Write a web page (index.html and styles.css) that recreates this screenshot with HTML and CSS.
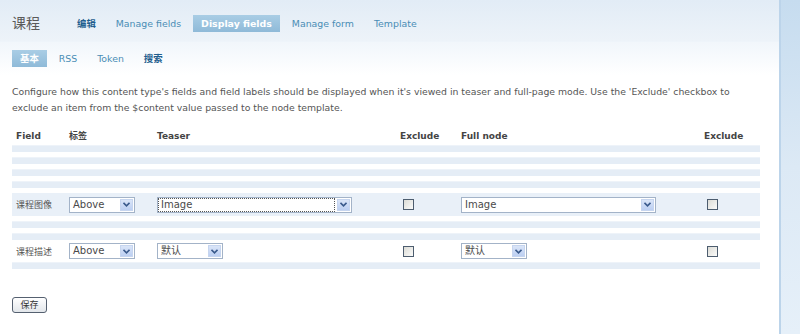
FILE: index.html
```html
<!DOCTYPE HTML>
<html lang="zh">
<head>
    <meta charset=UTF-8>
    <title>课程 - Display fields</title>
    <link rel="stylesheet" href="styles.css">
</head>
<body>

<div class="page">
    <div class="main">

        <!-- 标题和主选项卡 -->
        <div class="head">
            <h2 class="title">课程</h2>
            <ul class="tabs">
                <li><a href="#" class="cjk">编辑</a></li>
                <li><a href="#">Manage fields</a></li>
                <li class="active"><a href="#">Display fields</a></li>
                <li><a href="#">Manage form</a></li>
                <li><a href="#">Template</a></li>
            </ul>
        </div>

        <!-- 二级选项卡 -->
        <ul class="subtabs">
            <li class="active"><a href="#">基本</a></li>
            <li><a href="#">RSS</a></li>
            <li><a href="#">Token</a></li>
            <li><a href="#" class="cjk">搜索</a></li>
        </ul>

        <div class="content">
            <p class="desc">Configure how this content type's fields and field labels should be displayed when it's viewed in teaser and full-page mode. Use the 'Exclude' checkbox to exclude an item from the $content value passed to the node template.</p>

            <table class="fields">
                <colgroup>
                    <col class="c-field">
                    <col class="c-label">
                    <col class="c-teaser">
                    <col class="c-ex">
                    <col class="c-full">
                    <col class="c-ex2">
                </colgroup>
                <tr class="header">
                    <th>Field</th>
                    <th class="cjk">标签</th>
                    <th>Teaser</th>
                    <th>Exclude</th>
                    <th>Full node</th>
                    <th>Exclude</th>
                </tr>
                <!-- 隐藏字段留下的空行 -->
                <tr class="blank even"><td colspan="6"></td></tr>
                <tr class="blank odd"><td colspan="6"></td></tr>
                <tr class="blank even"><td colspan="6"></td></tr>
                <tr class="blank odd"><td colspan="6"></td></tr>
                <tr class="blank even"><td colspan="6"></td></tr>
                <tr class="blank odd"><td colspan="6"></td></tr>
                <tr class="blank even"><td colspan="6"></td></tr>
                <tr class="blank odd"><td colspan="6"></td></tr>

                <tr class="item even">
                    <td>课程图像</td>
                    <td><span class="select w-short"><span class="val">Above</span><span class="arrow"><svg width="7" height="5" viewBox="0 0 7 5"><path d="M0.5 0.8 L3.5 3.8 L6.5 0.8" fill="none" stroke="#3a5a8c" stroke-width="1.6"/></svg></span></span></td>
                    <td><span class="select w-long focus"><span class="val">Image</span><span class="arrow"><svg width="7" height="5" viewBox="0 0 7 5"><path d="M0.5 0.8 L3.5 3.8 L6.5 0.8" fill="none" stroke="#3a5a8c" stroke-width="1.6"/></svg></span></span></td>
                    <td><span class="checkbox"></span></td>
                    <td><span class="select w-long"><span class="val">Image</span><span class="arrow"><svg width="7" height="5" viewBox="0 0 7 5"><path d="M0.5 0.8 L3.5 3.8 L6.5 0.8" fill="none" stroke="#3a5a8c" stroke-width="1.6"/></svg></span></span></td>
                    <td><span class="checkbox"></span></td>
                </tr>

                <tr class="blank odd"><td colspan="6"></td></tr>
                <tr class="blank even"><td colspan="6"></td></tr>
                <tr class="blank odd"><td colspan="6"></td></tr>
                <tr class="blank even"><td colspan="6"></td></tr>

                <tr class="item odd">
                    <td>课程描述</td>
                    <td><span class="select w-short"><span class="val">Above</span><span class="arrow"><svg width="7" height="5" viewBox="0 0 7 5"><path d="M0.5 0.8 L3.5 3.8 L6.5 0.8" fill="none" stroke="#3a5a8c" stroke-width="1.6"/></svg></span></span></td>
                    <td><span class="select w-short"><span class="val">默认</span><span class="arrow"><svg width="7" height="5" viewBox="0 0 7 5"><path d="M0.5 0.8 L3.5 3.8 L6.5 0.8" fill="none" stroke="#3a5a8c" stroke-width="1.6"/></svg></span></span></td>
                    <td><span class="checkbox"></span></td>
                    <td><span class="select w-short"><span class="val">默认</span><span class="arrow"><svg width="7" height="5" viewBox="0 0 7 5"><path d="M0.5 0.8 L3.5 3.8 L6.5 0.8" fill="none" stroke="#3a5a8c" stroke-width="1.6"/></svg></span></span></td>
                    <td><span class="checkbox"></span></td>
                </tr>
                <tr class="blank even tail"><td colspan="6"></td></tr>
            </table>

            <button class="save">保存</button>
        </div>

    </div>
    <div class="side"></div>
</div>

</body>
</html>
```

FILE: styles.css
```css
body {
    margin: 0;
    font-family: "DejaVu Sans", "Noto Sans CJK SC", sans-serif;
    font-size: 9px;
    color: #555;
    background-color: #fff;
}

ul {
    list-style-type: none;
    margin: 0;
    padding: 0;
}

a {
    text-decoration: none;
}

.page {
    display: flex;
    height: 334px;
}

.main {
    width: 779px;
    background-color: #fff;
}

.side {
    flex: 1;
    border-left: 2px solid #bcd4ea;
    background: linear-gradient(#c6dcef, #dce9f5 50%, #e6f0f9);
}

/* 标题和主选项卡 */
.head {
    display: flex;
    align-items: center;
    height: 38px;
    padding: 3px 0 0 12px;
    border-bottom: 1px solid #eef4fa;
    background: linear-gradient(#e2ecf6, #edf3f9);
}

.title {
    margin: 0 29px 0 0;
    font-family: "Noto Sans CJK SC", sans-serif;
    font-size: 14px;
    font-weight: normal;
    color: #5a5a5a;
    line-height: 18px;
}

.tabs, .subtabs {
    display: flex;
    gap: 4px;
}

.tabs a, .subtabs a {
    display: block;
    height: 17px;
    line-height: 17px;
    padding: 0 8px;
    color: #4a8db5;
    font-size: 9.4px;
}

.tabs a.cjk, .subtabs a.cjk {
    color: #1f5e8e;
    font-weight: bold;
}

.tabs .active a, .subtabs .active a {
    color: #fff;
    font-weight: bold;
    background: linear-gradient(#a9cde5, #8fbad8);
}

.tabs {
    margin-top: 2px;
}

/* 二级选项卡 */
.subtabs {
    height: 33px;
    padding: 8px 12px 0 12px;
    box-sizing: border-box;
    background: linear-gradient(#f1f6fb, #fff);
}

.content {
    padding: 0 19px 0 12px;
}

.desc {
    margin: 9px 0 10px 0;
    line-height: 16px;
    font-size: 9.3px;
}

/* 字段表格 */
.fields {
    width: 748px;
    border-collapse: collapse;
    table-layout: fixed;
}

.c-field { width: 53px; }
.c-label { width: 88px; }
.c-teaser { width: 243px; }
.c-ex { width: 61px; }
.c-full { width: 243px; }
.c-ex2 { width: 60px; }

.fields th {
    height: 19px;
    padding: 0 4px;
    text-align: left;
    color: #444;
    font-weight: bold;
}

.fields td {
    padding: 0 4px;
    white-space: nowrap;
}

.blank td {
    padding: 0;
}

.blank.even td {
    height: 6px;
    background-color: #e5edf6;
    border-top: 1px solid #eef3f9;
}

.blank.odd td {
    height: 5px;
    background-color: #fff;
}

.item td {
    height: 23px;
}

.item.odd td {
    height: 22px;
}

.item.even td {
    background-color: #e9f0f8;
}

.item.odd td {
    background-color: #fff;
}

/* 下拉框 */
.select {
    display: flex;
    align-items: stretch;
    height: 16px;
    box-sizing: border-box;
    border: 1px solid #a3b3c8;
    background-color: #fff;
    font-size: 10px;
    color: #4a4a4a;
}

.w-short {
    width: 66px;
}

.w-long {
    width: 195px;
}

.select .val {
    flex: 1;
    padding-left: 3px;
    line-height: 14px;
    overflow: hidden;
}

.select.focus .val {
    margin: 1px 2px 1px 1px;
    line-height: 12px;
    padding-left: 2px;
    overflow: visible;
    outline: 1px dotted #555;
}

.select .arrow {
    width: 13px;
    margin: 1px;
    display: flex;
    align-items: center;
    justify-content: center;
    background: linear-gradient(#dae5f8, #bccff2);
    border: 1px solid #c6d5ef;
    box-sizing: border-box;
}

/* 复选框 */
.checkbox {
    display: block;
    width: 11px;
    height: 11px;
    margin-left: 3px;
    box-sizing: border-box;
    border: 1px solid #4d5d6f;
    background: linear-gradient(135deg, #dcdcd6, #fbfbfa);
}

.save {
    margin-top: 28px;
    height: 16px;
    width: 35px;
    padding: 0;
    font-family: "Noto Sans CJK SC", sans-serif;
    font-size: 9px;
    line-height: 14px;
    color: #333;
    border: 1px solid #556070;
    border-radius: 3px;
    background: linear-gradient(#fff, #e2e6ea);
}
```
